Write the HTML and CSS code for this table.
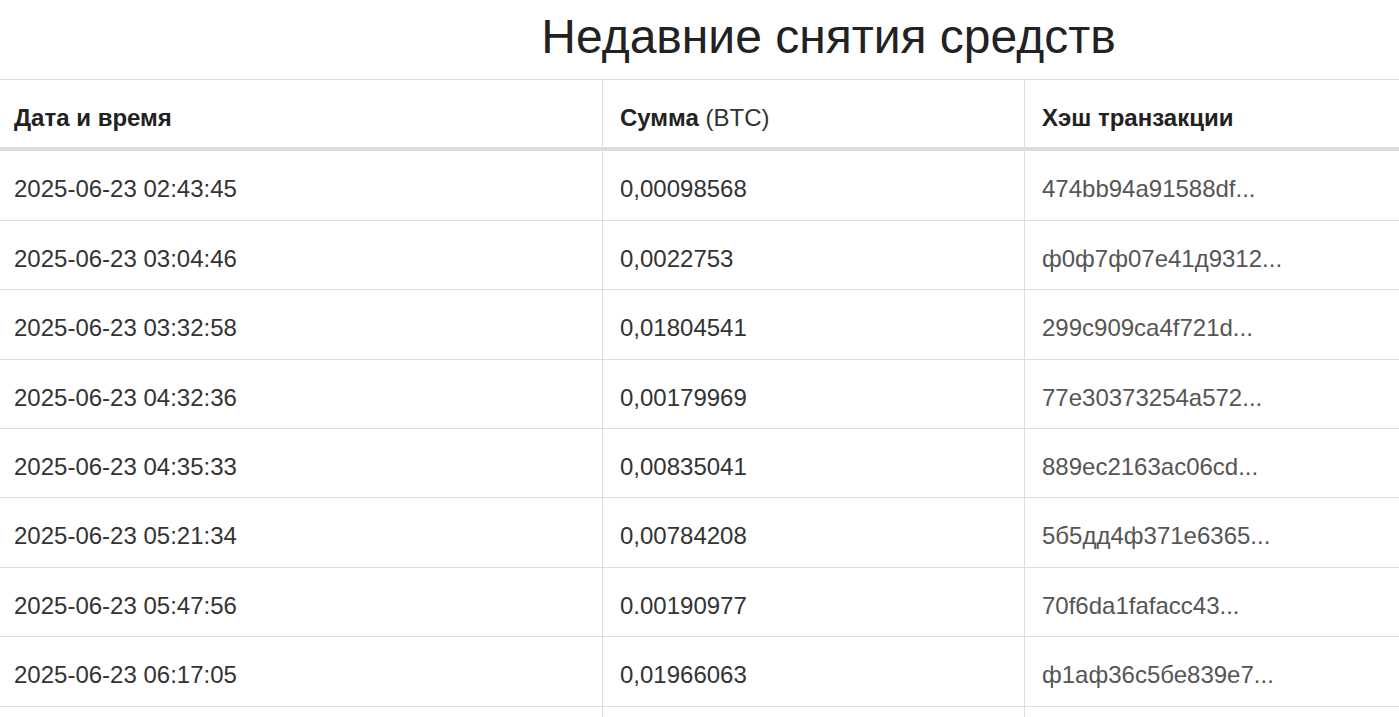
FILE: index.html
```html
<!DOCTYPE html>
<html lang="ru">
<head>
<meta charset="utf-8">
<title>Недавние снятия средств</title>
<link rel="stylesheet" href="styles.css">
</head>
<body>
<div class="page">
  <h2 class="title">Недавние снятия средств</h2>
  <table class="withdrawals">
    <thead>
      <tr>
        <th class="col-date">Дата и время</th>
        <th class="col-sum">Сумма <span class="unit">(BTC)</span></th>
        <th class="col-hash">Хэш транзакции</th>
      </tr>
    </thead>
    <tbody>
      <tr><td>2025-06-23 02:43:45</td><td>0,00098568</td><td class="hash">474bb94a91588df...</td></tr>
      <tr><td>2025-06-23 03:04:46</td><td>0,0022753</td><td class="hash">ф0ф7ф07е41д9312...</td></tr>
      <tr><td>2025-06-23 03:32:58</td><td>0,01804541</td><td class="hash">299c909ca4f721d...</td></tr>
      <tr><td>2025-06-23 04:32:36</td><td>0,00179969</td><td class="hash">77e30373254a572...</td></tr>
      <tr><td>2025-06-23 04:35:33</td><td>0,00835041</td><td class="hash">889ec2163ac06cd...</td></tr>
      <tr><td>2025-06-23 05:21:34</td><td>0,00784208</td><td class="hash">5б5дд4ф371е6365...</td></tr>
      <tr><td>2025-06-23 05:47:56</td><td>0.00190977</td><td class="hash">70f6da1fafacc43...</td></tr>
      <tr><td>2025-06-23 06:17:05</td><td>0,01966063</td><td class="hash">ф1аф36с5бе839е7...</td></tr>
      <tr class="spacer"><td>&nbsp;</td><td>&nbsp;</td><td>&nbsp;</td></tr>
    </tbody>
  </table>
</div>
</body>
</html>
```

FILE: styles.css
```css
html, body {
  margin: 0;
  padding: 0;
  background: #fff;
  overflow: hidden;
}

body {
  font-family: "Liberation Sans", Arial, Helvetica, sans-serif;
  color: #333;
}

.page {
  width: 1654px;
}

.title {
  margin: 0;
  height: 79px;
  display: flex;
  align-items: center;
  justify-content: center;
  font-size: 48px;
  font-weight: normal;
  color: #222;
  padding-bottom: 6px;
  padding-left: 3px;
  box-sizing: border-box;
}

.withdrawals {
  width: 100%;
  border-collapse: collapse;
  border-spacing: 0;
  font-size: 24px;
  table-layout: fixed;
}

.withdrawals th,
.withdrawals td {
  text-align: left;
  vertical-align: middle;
  line-height: 35.4px;
  padding: 20px 17px 13px;
  border-top: 1px solid #ddd;
  border-left: 1px solid #ddd;
  white-space: nowrap;
}

.withdrawals th:first-child,
.withdrawals td:first-child {
  border-left: none;
  padding-left: 14px;
}

.withdrawals th {
  font-weight: bold;
  color: #222;
  padding-bottom: 12px;
  border-bottom: 4px solid #ddd;
}

.withdrawals .unit {
  font-weight: normal;
  color: #333;
}

.col-date { width: 571px; }
.col-sum { width: 387px; }

.withdrawals td.hash {
  color: #555;
}
```
